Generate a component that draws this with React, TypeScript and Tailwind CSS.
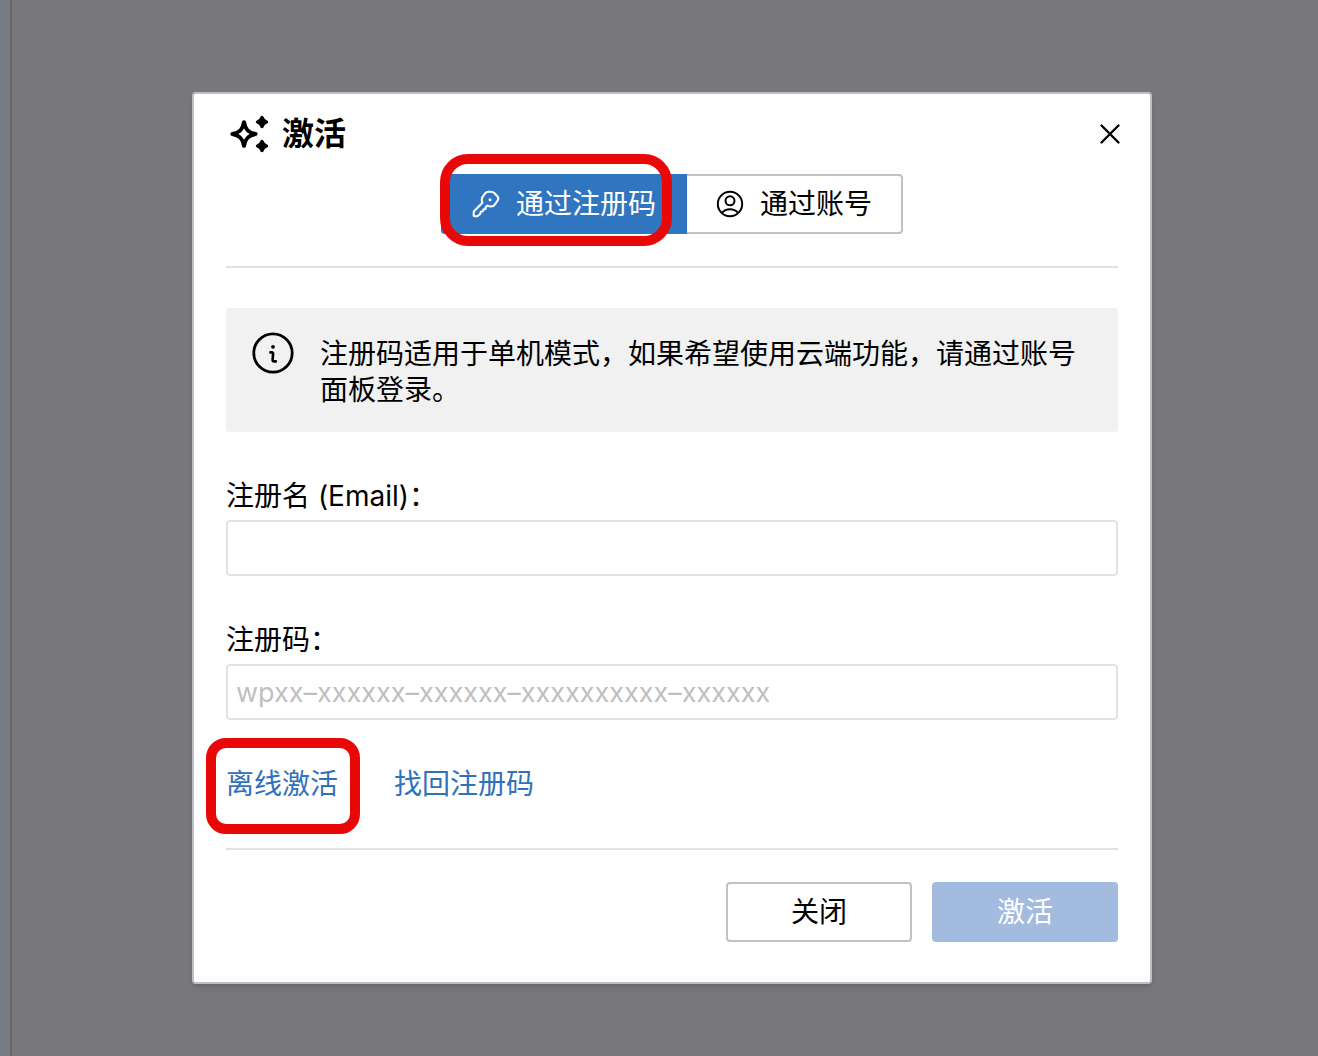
import { useState } from "react"
import type { ReactNode } from "react"
import { clsx } from "clsx"

function SparklesIcon() {
  return (
    <svg viewBox="0 0 48 48" className="h-12 w-12" fill="none" aria-hidden="true">
      <path
        d="M18 12.2C19.2 19.4 22.4 22.8 29.6 24C22.4 25.2 19.2 28.6 18 35.8C16.8 28.6 13.6 25.2 6.4 24C13.6 22.8 16.8 19.4 18 12.2Z"
        stroke="currentColor"
        strokeWidth="4"
        strokeLinejoin="round"
      />
      <path
        d="M36 7.5C36.9 10.4 37.6 11.1 40.5 12C37.6 12.9 36.9 13.6 36 16.5C35.1 13.6 34.4 12.9 31.5 12C34.4 11.1 35.1 10.4 36 7.5Z M36 31.5C36.9 34.4 37.6 35.1 40.5 36C37.6 36.9 36.9 37.6 36 40.5C35.1 37.6 34.4 36.9 31.5 36C34.4 35.1 35.1 34.4 36 31.5Z"
        fill="currentColor"
        stroke="currentColor"
        strokeWidth="3.4"
        strokeLinejoin="round"
      />
    </svg>
  )
}

function KeyIcon() {
  return (
    <svg viewBox="0 0 28 28" className="h-7 w-7" fill="none" aria-hidden="true">
      <path
        d="M1.8 21.4L10.4 12.8C9.6 10.8 9.5 8.8 10.6 6.8L13.4 3C14.2 2 15.4 1.7 16.6 1.7H19C20.2 1.7 21.4 2.3 22.2 3.1L25.3 6.3C26.4 7.4 26.5 9.2 25.6 10.5L23 14.4C22.2 15.6 20.8 16.5 19.3 16.5C17.8 16.5 16.4 16.2 15.3 15.6L13.6 17.3V19L11.6 19.4L10.8 21.2L8.8 21.8L8.2 24L5.4 26.2H2.6C2 26.2 1.6 25.8 1.6 25.2Z"
        stroke="currentColor"
        strokeWidth="2.1"
        strokeLinejoin="round"
      />
      <circle cx="18" cy="9.8" r="1.5" fill="currentColor" />
    </svg>
  )
}

function AccountIcon() {
  return (
    <svg viewBox="0 0 28 28" className="h-7 w-7" fill="none" stroke="currentColor" strokeWidth="2" aria-hidden="true">
      <circle cx="14" cy="14" r="12.2" />
      <circle cx="14" cy="10.8" r="4.5" />
      <path d="M6 22.8C8 20.4 10.8 19.2 14 19.2C17.2 19.2 20 20.4 22 22.8" />
    </svg>
  )
}

function CloseIcon() {
  return (
    <svg viewBox="0 0 24 24" className="h-6 w-6" fill="none" aria-hidden="true">
      <path d="M3.5 3.5L20.5 20.5M20.5 3.5L3.5 20.5" stroke="currentColor" strokeWidth="2.4" strokeLinecap="round" />
    </svg>
  )
}

function InfoIcon() {
  return (
    <svg viewBox="0 0 42 42" className="h-[42px] w-[42px] shrink-0" fill="none" aria-hidden="true">
      <circle cx="21" cy="21" r="19.2" stroke="currentColor" strokeWidth="2.8" />
      <circle cx="21" cy="14.8" r="1.9" fill="currentColor" />
      <path d="M18.4 20.4H19.8C20.8 20.4 21.2 21 21.1 22L20.6 27.6C20.5 28.8 21 29.4 22 29.4H23.8" stroke="currentColor" strokeWidth="2.6" strokeLinecap="round" strokeLinejoin="round" />
    </svg>
  )
}

// Red frame that points the reader to a control
function Highlight({ className }: { className: string }) {
  return <span aria-hidden="true" className={clsx("pointer-events-none absolute z-10 border-[10px] border-[#e90808]", className)} />
}

function Field({ id, label, placeholder, type = "text" }: { id: string; label: string; placeholder?: string; type?: string }) {
  return (
    <div className="mt-10">
      <label htmlFor={id} className="block leading-[48px]">
        {label}
      </label>
      <input
        id={id}
        type={type}
        placeholder={placeholder}
        className="block h-14 w-full rounded-sm border-2 border-[#dfe1e3] bg-white px-2 text-[27px] outline-none placeholder:text-[#bfbfbf]"
      />
    </div>
  )
}

export default function App() {
  const [tab, setTab] = useState("code")

  const tabs: { id: string; name: string; icon: ReactNode }[] = [
    { id: "code", name: "通过注册码", icon: <KeyIcon /> },
    { id: "account", name: "通过账号", icon: <AccountIcon /> },
  ]

  return (
    <div className="flex min-h-screen bg-[#78777c] font-['Inter','Noto_Sans_CJK_SC',sans-serif] text-[28px] leading-9 text-black" lang="zh-CN">
      <div className="w-3 shrink-0 border-r-2 border-[#67666b] bg-[#757c84]" />

      <main className="flex flex-1 items-start justify-center pt-[92px] pb-16 pl-3.5">
        <div role="dialog" aria-labelledby="title" className="w-full max-w-[960px] rounded border-2 border-[#bfc0c6] bg-white pb-10 shadow-md">
          {/* Title bar */}
          <header className="flex h-20 items-center justify-between pr-7 pl-8">
            <h1 id="title" className="flex items-center gap-2 text-[32px] font-bold">
              <SparklesIcon />
              激活
            </h1>
            <button type="button" aria-label="关闭窗口">
              <CloseIcon />
            </button>
          </header>

          <div className="px-8">
            {/* Activation method */}
            <div className="flex justify-center border-b-2 border-[#e0e2e4] pb-8">
              <div className="relative">
                <div className="flex">
                  {tabs.map((item) => (
                    <button
                      key={item.id}
                      type="button"
                      aria-pressed={tab === item.id}
                      onClick={() => setTab(item.id)}
                      className={clsx(
                        "flex h-15 items-center gap-4 border-y-2 px-[29px] last:rounded-r last:border-r-2 first:rounded-l first:border-x-2",
                        tab === item.id ? "border-[#2f75c0] bg-[#2f75c0] text-white" : "border-[#bfc0c8] bg-white",
                      )}
                    >
                      {item.icon}
                      {item.name}
                    </button>
                  ))}
                </div>
                <Highlight className="-top-5 -left-px h-[92px] w-[232px] rounded-[28px]" />
              </div>
            </div>

            <div className="mt-10 flex items-start gap-[26px] rounded bg-[#f1f1f1] px-[26px] py-6">
              <InfoIcon />
              <p className="pt-1">注册码适用于单机模式，如果希望使用云端功能，请通过账号面板登录。</p>
            </div>

            <Field id="email" type="email" label="注册名 (Email)：" />
            <Field id="code" label="注册码：" placeholder="wpxx–xxxxxx–xxxxxx–xxxxxxxxxx–xxxxxx" />

            <div className="flex h-32 items-center gap-14 text-[#2f71bb]">
              <a href="#offline" className="relative">
                离线激活
                <Highlight className="-top-7 -left-5 h-24 w-[154px] rounded-[20px]" />
              </a>
              <a href="#recover">找回注册码</a>
            </div>

            <div className="flex justify-end gap-5 border-t-2 border-[#e0e2e4] pt-8">
              <button type="button" className="h-15 w-[186px] rounded border-2 border-[#bfc1c7] bg-white">
                关闭
              </button>
              <button type="button" disabled className="h-15 w-[186px] rounded bg-[#a2bbdf] text-white">
                激活
              </button>
            </div>
          </div>
        </div>
      </main>
    </div>
  )
}
